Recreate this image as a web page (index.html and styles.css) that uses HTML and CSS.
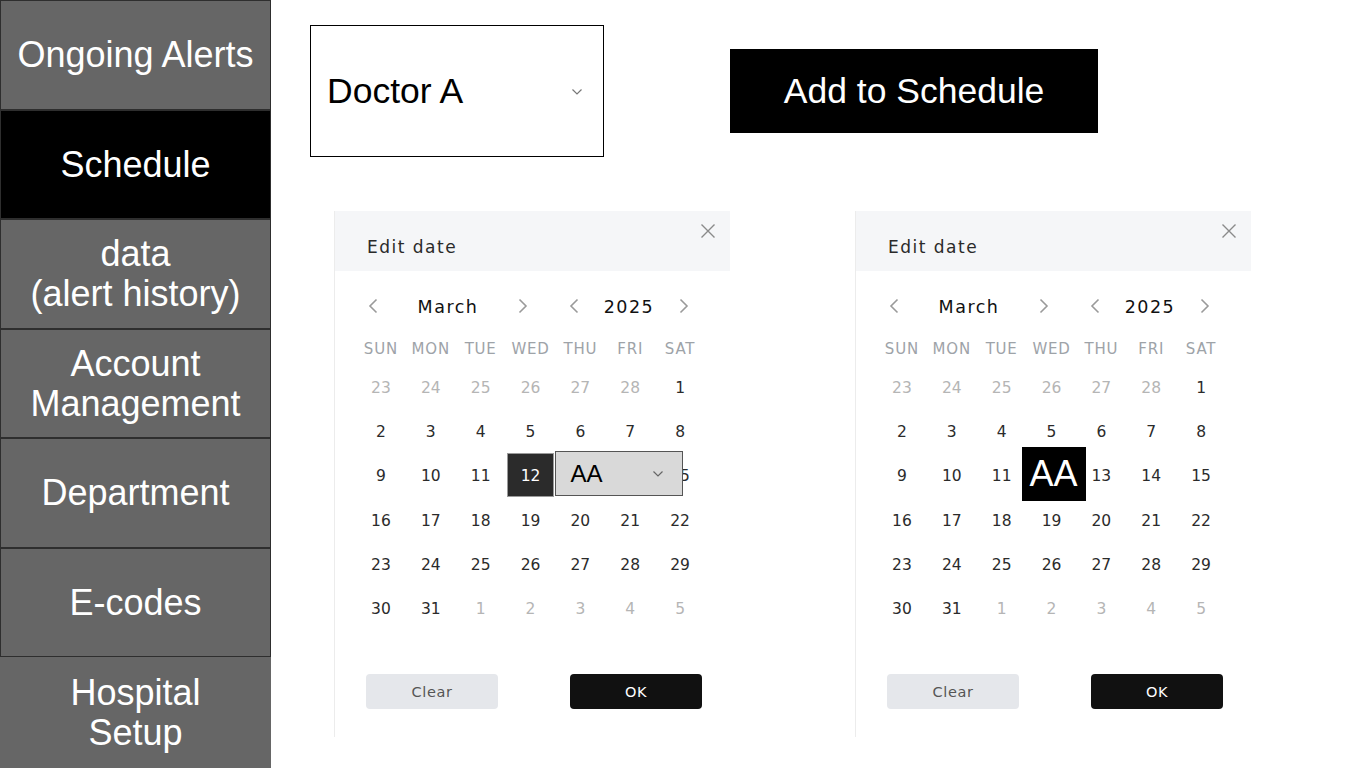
FILE: index.html
```html
<!DOCTYPE html>
<html lang="en">
<head>
<meta charset="utf-8">
<title>Schedule</title>
<link rel="stylesheet" href="styles.css">
</head>
<body>
<nav class="sidebar">
  <div class="nav-item">Ongoing Alerts</div>
  <div class="nav-item active">Schedule</div>
  <div class="nav-item">data<br>(alert history)</div>
  <div class="nav-item">Account<br>Management</div>
  <div class="nav-item">Department</div>
  <div class="nav-item">E-codes</div>
  <div class="nav-item last">Hospital<br>Setup</div>
</nav>
<main class="main">
  <div class="top-row">
    <div class="select">
      <span>Doctor A</span>
      <svg class="select-chev" width="12" height="8" viewBox="0 0 12 8"><polyline points="1.5,1.5 6,6 10.5,1.5" fill="none" stroke="#777" stroke-width="1.2"/></svg>
    </div>
    <div class="add-btn">Add to Schedule</div>
  </div>
  <div class="calendars">
    <section class="panel">
      <div class="panel-header">
        <span class="title">Edit date</span>
        <svg class="close" width="16" height="16" viewBox="0 0 16 16"><path d="M1.5 1.5 L14.5 14.5 M14.5 1.5 L1.5 14.5" stroke="#8a8a8a" stroke-width="1.4" fill="none"/></svg>
      </div>
      <div class="nav-row">
        <span class="chev"><svg width="10" height="16" viewBox="0 0 10 16"><polyline points="8.5,1.5 2,8 8.5,14.5" fill="none" stroke="#9a9a9a" stroke-width="1.6"/></svg></span>
        <span class="month">March</span>
        <span class="chev"><svg width="10" height="16" viewBox="0 0 10 16"><polyline points="1.5,1.5 8,8 1.5,14.5" fill="none" stroke="#9a9a9a" stroke-width="1.6"/></svg></span>
        <span class="chev second"><svg width="10" height="16" viewBox="0 0 10 16"><polyline points="8.5,1.5 2,8 8.5,14.5" fill="none" stroke="#9a9a9a" stroke-width="1.6"/></svg></span>
        <span class="year">2025</span>
        <span class="chev"><svg width="10" height="16" viewBox="0 0 10 16"><polyline points="1.5,1.5 8,8 1.5,14.5" fill="none" stroke="#9a9a9a" stroke-width="1.6"/></svg></span>
      </div>
      <div class="grid">
        <div class="wd">SUN</div><div class="wd">MON</div><div class="wd">TUE</div><div class="wd">WED</div><div class="wd">THU</div><div class="wd">FRI</div><div class="wd">SAT</div>
        <div class="d o">23</div><div class="d o">24</div><div class="d o">25</div><div class="d o">26</div><div class="d o">27</div><div class="d o">28</div><div class="d">1</div>
        <div class="d">2</div><div class="d">3</div><div class="d">4</div><div class="d">5</div><div class="d">6</div><div class="d">7</div><div class="d">8</div>
        <div class="d">9</div><div class="d">10</div><div class="d">11</div><div class="d sel"><span class="sel-box">12</span>
          <div class="aa-drop"><span>AA</span><svg width="12" height="8" viewBox="0 0 12 8"><polyline points="1.5,1.5 6,6 10.5,1.5" fill="none" stroke="#666" stroke-width="1.2"/></svg></div>
        </div><div class="d">13</div><div class="d">14</div><div class="d">15</div>
        <div class="d">16</div><div class="d">17</div><div class="d">18</div><div class="d">19</div><div class="d">20</div><div class="d">21</div><div class="d">22</div>
        <div class="d">23</div><div class="d">24</div><div class="d">25</div><div class="d">26</div><div class="d">27</div><div class="d">28</div><div class="d">29</div>
        <div class="d">30</div><div class="d">31</div><div class="d o">1</div><div class="d o">2</div><div class="d o">3</div><div class="d o">4</div><div class="d o">5</div>
      </div>
      <div class="actions">
        <div class="btn clear">Clear</div>
        <div class="btn ok">OK</div>
      </div>
    </section>
    <section class="panel">
      <div class="panel-header">
        <span class="title">Edit date</span>
        <svg class="close" width="16" height="16" viewBox="0 0 16 16"><path d="M1.5 1.5 L14.5 14.5 M14.5 1.5 L1.5 14.5" stroke="#8a8a8a" stroke-width="1.4" fill="none"/></svg>
      </div>
      <div class="nav-row">
        <span class="chev"><svg width="10" height="16" viewBox="0 0 10 16"><polyline points="8.5,1.5 2,8 8.5,14.5" fill="none" stroke="#9a9a9a" stroke-width="1.6"/></svg></span>
        <span class="month">March</span>
        <span class="chev"><svg width="10" height="16" viewBox="0 0 10 16"><polyline points="1.5,1.5 8,8 1.5,14.5" fill="none" stroke="#9a9a9a" stroke-width="1.6"/></svg></span>
        <span class="chev second"><svg width="10" height="16" viewBox="0 0 10 16"><polyline points="8.5,1.5 2,8 8.5,14.5" fill="none" stroke="#9a9a9a" stroke-width="1.6"/></svg></span>
        <span class="year">2025</span>
        <span class="chev"><svg width="10" height="16" viewBox="0 0 10 16"><polyline points="1.5,1.5 8,8 1.5,14.5" fill="none" stroke="#9a9a9a" stroke-width="1.6"/></svg></span>
      </div>
      <div class="grid">
        <div class="wd">SUN</div><div class="wd">MON</div><div class="wd">TUE</div><div class="wd">WED</div><div class="wd">THU</div><div class="wd">FRI</div><div class="wd">SAT</div>
        <div class="d o">23</div><div class="d o">24</div><div class="d o">25</div><div class="d o">26</div><div class="d o">27</div><div class="d o">28</div><div class="d">1</div>
        <div class="d">2</div><div class="d">3</div><div class="d">4</div><div class="d">5</div><div class="d">6</div><div class="d">7</div><div class="d">8</div>
        <div class="d">9</div><div class="d">10</div><div class="d">11</div><div class="d aa-cell"><span class="aa-badge">AA</span></div><div class="d">13</div><div class="d">14</div><div class="d">15</div>
        <div class="d">16</div><div class="d">17</div><div class="d">18</div><div class="d">19</div><div class="d">20</div><div class="d">21</div><div class="d">22</div>
        <div class="d">23</div><div class="d">24</div><div class="d">25</div><div class="d">26</div><div class="d">27</div><div class="d">28</div><div class="d">29</div>
        <div class="d">30</div><div class="d">31</div><div class="d o">1</div><div class="d o">2</div><div class="d o">3</div><div class="d o">4</div><div class="d o">5</div>
      </div>
      <div class="actions">
        <div class="btn clear">Clear</div>
        <div class="btn ok">OK</div>
      </div>
    </section>
  </div>
</main>
</body>
</html>
```
FILE: styles.css
```css
* { box-sizing: border-box; }
html, body { margin: 0; padding: 0; }
body {
  width: 1366px;
  height: 768px;
  overflow: hidden;
  background: #fff;
  display: flex;
  font-family: "Liberation Sans", Arial, sans-serif;
}

.sidebar {
  width: 271px;
  height: 768px;
  display: flex;
  flex-direction: column;
  flex-shrink: 0;
}
.nav-item {
  height: 109.5px;
  flex-shrink: 0;
  background: #666666;
  border: 1px solid #2e2e2e;
  color: #fff;
  font-size: 36px;
  line-height: 40px;
  text-align: center;
  display: flex;
  align-items: center;
  justify-content: center;
  padding-top: 1px;
}
.nav-item.active { background: #000; }
.nav-item.last { border: none; flex: 1; height: auto; }

.main {
  flex: 1;
  padding: 25px 0 0 39px;
}
.top-row {
  display: flex;
  align-items: center;
  gap: 126px;
}
.select {
  width: 294px;
  height: 132px;
  border: 1px solid #000;
  display: flex;
  align-items: center;
  justify-content: space-between;
  padding: 0 20px 0 16px;
  font-size: 35.5px;
  color: #000;
}
.select-chev { margin-top: 2px; }
.add-btn {
  width: 368px;
  height: 84px;
  background: #000;
  color: #fff;
  font-size: 35.5px;
  display: flex;
  align-items: center;
  justify-content: center;
}

.calendars {
  display: flex;
  gap: 125px;
  margin: 54px 0 0 24px;
}
.panel {
  width: 396px;
  height: 526px;
  background: #fff;
  border-left: 1px solid #ececec;
  font-family: "DejaVu Sans", "Noto Sans", sans-serif;
  display: flex;
  flex-direction: column;
}
.panel-header {
  height: 60px;
  background: #f5f6f8;
  position: relative;
  display: flex;
  align-items: center;
  padding-left: 32px;
}
.title {
  font-size: 17px;
  letter-spacing: 1.5px;
  color: #2a2a2a;
  margin-top: 11px;
}
.close {
  position: absolute;
  top: 12px;
  right: 14px;
}

.nav-row {
  display: flex;
  align-items: center;
  height: 34px;
  margin-top: 18px;
  padding-left: 21px;
}
.chev {
  width: 34px;
  display: flex;
  justify-content: center;
}
.chev.second { margin-left: 17px; }
.month, .year {
  text-align: center;
  font-size: 17.5px;
  letter-spacing: 1.5px;
  color: #111;
  padding-top: 2px;
}
.month { width: 116px; }
.year { width: 76px; }

.grid {
  display: grid;
  grid-template-columns: repeat(7, 49.86px);
  grid-template-rows: 34px repeat(6, 44.2px);
  margin-top: 8px;
  padding-left: 21px;
}
.wd {
  display: flex;
  align-items: center;
  justify-content: center;
  font-size: 15px;
  letter-spacing: 0.8px;
  color: #9ea3a8;
  padding-top: 2px;
}
.d {
  display: flex;
  align-items: center;
  justify-content: center;
  font-size: 15.5px;
  color: #2b2b2b;
  position: relative;
  padding-top: 2px;
}
.d.o { color: #b5b5b5; }
.sel-box {
  width: 47px;
  height: 44px;
  margin-top: -2px;
  padding-top: 2px;
  background: #2b2b2b;
  border: 1px solid #9a9a9a;
  color: #fff;
  display: flex;
  align-items: center;
  justify-content: center;
}
.aa-drop {
  position: absolute;
  left: 49px;
  top: -2px;
  width: 128px;
  height: 45px;
  background: #d9d9d9;
  border: 1px solid #555;
  display: flex;
  align-items: center;
  justify-content: space-between;
  padding: 0 18px 0 15px;
  font-family: "Liberation Sans", Arial, sans-serif;
  font-size: 24px;
  letter-spacing: 0;
  color: #000;
  z-index: 2;
}
.aa-badge {
  position: absolute;
  left: -5px;
  top: -6px;
  width: 64px;
  height: 54px;
  background: #000;
  color: #fff;
  font-family: "Liberation Sans", Arial, sans-serif;
  font-size: 36px;
  display: flex;
  align-items: center;
  justify-content: center;
}

.actions {
  display: flex;
  gap: 72px;
  padding-left: 31px;
  margin-top: 44px;
}
.btn {
  width: 132px;
  height: 35px;
  border-radius: 4px;
  display: flex;
  align-items: center;
  justify-content: center;
  font-size: 14.5px;
  letter-spacing: 0.6px;
}
.btn.clear { background: #e5e7eb; color: #555; }
.btn.ok { background: #111; color: #fff; }
```
